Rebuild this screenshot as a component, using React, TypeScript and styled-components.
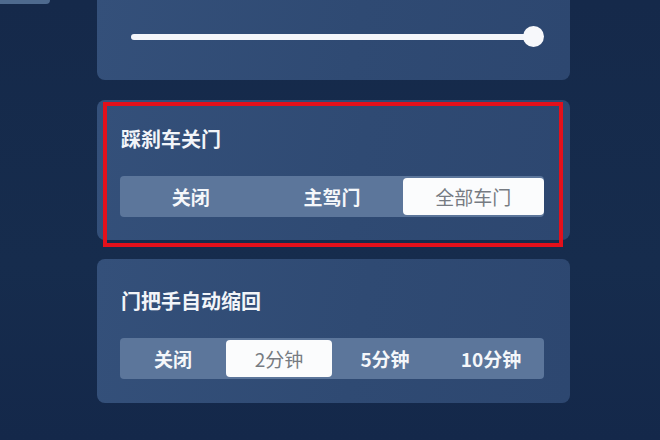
import React from "react";
import styled, { createGlobalStyle } from "styled-components";

const Global = createGlobalStyle`
  html, body { margin: 0; padding: 0; }
  body {
    width: 660px;
    height: 440px;
    overflow: hidden;
    background: #152a4a;
    font-family: "Noto Sans CJK SC", "Noto Sans", sans-serif;
  }
`;

const Page = styled.div`
  display: flex;
  width: 660px;
  height: 440px;
  background: linear-gradient(180deg, #15294a 0%, #162c4d 60%, #14284a 100%);
  overflow: hidden;
`;

const Sidebar = styled.div`
  width: 97px;
  flex: none;
`;

const TabStub = styled.div`
  width: 50px;
  height: 4px;
  background: #4e6a8e;
  border-radius: 0 0 4px 0;
`;

const Column = styled.div`
  width: 473px;
  display: flex;
  flex-direction: column;
  margin-top: -20px;
`;

const Card = styled.div<{ $h: number; $mt?: number }>`
  position: relative;
  height: ${(p) => p.$h}px;
  margin-top: ${(p) => p.$mt ?? 0}px;
  box-sizing: border-box;
  border-radius: 8px;
  background: linear-gradient(100deg, #34507a 0%, #2f4a73 55%, #2d4770 100%);
  padding: 0 26px 0 23px;
  display: flex;
  flex-direction: column;
`;

const SliderRow = styled.div`
  display: flex;
  align-items: center;
  margin-top: 46px;
  padding-left: 11px;
`;

const Track = styled.div`
  flex: 1;
  height: 6px;
  background: #f4f6fa;
  border-radius: 3px;
`;

const Knob = styled.div`
  width: 21px;
  height: 21px;
  border-radius: 50%;
  background: #f7f8fb;
  margin-left: -11px;
  margin-right: 0;
`;

const Title = styled.div<{ $mt: number }>`
  margin-top: ${(p) => p.$mt}px;
  margin-left: 1px;
  font-size: 20px;
  line-height: 26px;
  font-weight: 700;
  color: #f2f5f9;
`;

const Segmented = styled.div<{ $mt: number }>`
  margin-top: ${(p) => p.$mt}px;
  height: 41px;
  box-sizing: border-box;
  padding: 2px 0;
  display: flex;
  background: #5c769b;
  border-radius: 4px;
`;

const Segment = styled.div<{ $active?: boolean }>`
  flex: 1;
  display: flex;
  align-items: center;
  justify-content: center;
  border-radius: 4px;
  font-size: 19px;
  background: ${(p) => (p.$active ? "#fbfcfd" : "transparent")};
  color: ${(p) => (p.$active ? "#767b82" : "#f5f7fa")};
  font-weight: ${(p) => (p.$active ? 400 : 700)};
`;

const Highlight = styled.div`
  position: absolute;
  left: 6px;
  top: 2px;
  right: 7px;
  bottom: -7px;
  border: 4px solid #e3101b;
  pointer-events: none;
`;

export default function App() {
  const brake = ["关闭", "主驾门", "全部车门"];
  const handle = ["关闭", "2分钟", "5分钟", "10分钟"];
  return (
    <>
      <Global />
      <Page>
        <Sidebar>
          <TabStub />
        </Sidebar>
        <Column>
          <Card $h={100}>
            <SliderRow>
              <Track />
              <Knob />
            </SliderRow>
          </Card>
          <Card $h={140} $mt={20}>
            <Title $mt={26}>踩刹车关门</Title>
            <Segmented $mt={24}>
              {brake.map((t, i) => (
                <Segment key={t} $active={i === 2}>
                  {t}
                </Segment>
              ))}
            </Segmented>
            <Highlight />
          </Card>
          <Card $h={144} $mt={19}>
            <Title $mt={29}>门把手自动缩回</Title>
            <Segmented $mt={24}>
              {handle.map((t, i) => (
                <Segment key={t} $active={i === 1}>
                  {t}
                </Segment>
              ))}
            </Segmented>
          </Card>
        </Column>
      </Page>
    </>
  );
}
